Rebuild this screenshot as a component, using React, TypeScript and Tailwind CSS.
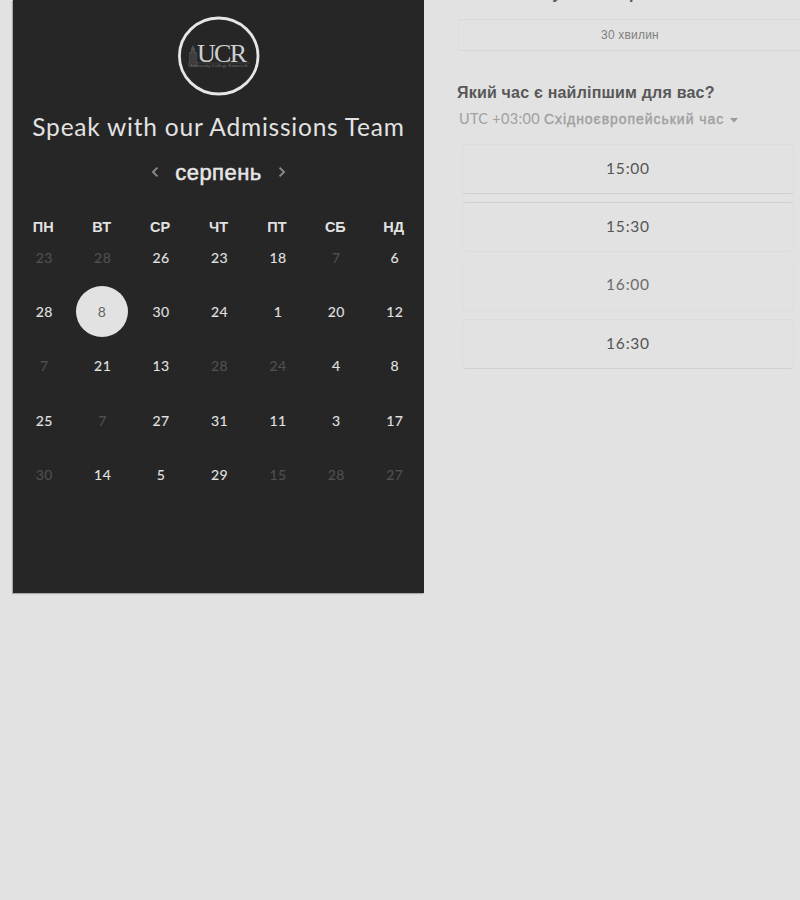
const weekdays = ['ПН', 'ВТ', 'СР', 'ЧТ', 'ПТ', 'СБ', 'НД'];

type Day = { n: number; off?: boolean; selected?: boolean };
const off = (n: number): Day => ({ n, off: true });
const on = (n: number): Day => ({ n });

const weeks: Day[][] = [
  [off(23), off(28), on(26), on(23), on(18), off(7), on(6)],
  [on(28), { n: 8, selected: true }, on(30), on(24), on(1), on(20), on(12)],
  [off(7), on(21), on(13), off(28), off(24), on(4), on(8)],
  [on(25), off(7), on(27), on(31), on(11), on(3), on(17)],
  [off(30), on(14), on(5), on(29), off(15), off(28), off(27)],
];

const slots = [
  { time: '15:00', border: 'border-t-[#dddddd] border-b-[#d0d0d0]', tone: 'text-[#555]' },
  { time: '15:30', border: 'border-t-[#d0d0d0] border-b-[#dcdcdc]', tone: 'text-[#555]' },
  { time: '16:00', border: 'border-t-[#dfdfdf] border-b-[#dedede]', tone: 'text-[#6c6c6c]' },
  { time: '16:30', border: 'border-t-[#dadada] border-b-[#d0d0d0]', tone: 'text-[#555]' },
];

function Logo() {
  return (
    <svg width="82" height="80" viewBox="0 0 82 80" className="block">
      <ellipse cx="40.7" cy="40" rx="39.3" ry="38" fill="none" stroke="#e6e6e6" strokeWidth="2.8" />
      <g fill="#505050">
        <path d="M15 29l2 4v4h-4v-4z" />
        <path d="M11 36h8v11h-8z" opacity=".75" />
        <path d="M10 46h10v5H10z" opacity=".5" />
      </g>
      <path d="M13 38v10M15 34v14M17 38v10" stroke="#303030" strokeWidth=".7" />
      <path d="M18 47h54" stroke="#4d4d4d" strokeWidth=".6" />
      <text x="19" y="45.8" fontFamily="Liberation Serif, serif" fontSize="26" fill="#cfcfcf" textLength="50" lengthAdjust="spacing">
        UCR
      </text>
      <text x="12.5" y="51.3" fontFamily="Liberation Serif, serif" fontSize="4.6" fill="#7a7a7a" textLength="57">
        University College Roosevelt
      </text>
    </svg>
  );
}

function Chevron({ right = false }: { right?: boolean }) {
  return (
    <svg width="8" height="12" viewBox="0 0 8 12" className={right ? 'rotate-180' : ''}>
      <path d="M6.4 1.6L2 6l4.4 4.4" fill="none" stroke="#888" strokeWidth="2" />
    </svg>
  );
}

function DayCell({ day }: { day: Day }) {
  if (day.selected) {
    return (
      <div className="flex items-center justify-center">
        <span className="-mt-px flex h-[51px] w-[52px] items-center justify-center rounded-[50%] bg-[#e2e2e2] pl-px text-[14px] text-[#666]">
          {day.n}
        </span>
      </div>
    );
  }
  return (
    <div
      className={`flex items-center justify-center pl-[2px] ${
        day.off
          ? 'text-[#505050] [-webkit-text-stroke:0.1px_#505050]'
          : 'text-[#e2e2e2] [-webkit-text-stroke:0.1px_#e2e2e2]'
      }`}
    >
      {day.n}
    </div>
  );
}

export default function App() {
  return (
    <div className="flex h-[900px] w-[800px] items-start overflow-hidden bg-[#e2e2e2] pl-[13px] font-['Lato','Liberation_Sans',sans-serif]">
      <section className="flex h-[593px] w-[411px] shrink-0 flex-col bg-[#262626] pt-4 shadow-[-1px_1px_1px_#aaa]">
        <div className="flex justify-center">
          <Logo />
        </div>
        <h1 className="mt-[13px] flex h-9 items-center justify-center whitespace-nowrap text-[24.5px] tracking-[0.78px] text-[#e2e2e2]">
          Speak with our Admissions Team
        </h1>
        <div className="mt-[9px] flex h-9 items-center justify-center gap-[16px]">
          <Chevron />
          <span className="font-['Liberation_Sans',sans-serif] text-[22px] tracking-[0.45px] text-[#e6e6e6] [-webkit-text-stroke:0.5px_#e6e6e6]">
            серпень
          </span>
          <Chevron right />
        </div>
        <div className="mt-[27px] grid h-5 grid-cols-7 px-[1px] font-['Liberation_Sans',sans-serif] text-[14.5px] font-bold leading-5 text-[#e2e2e2]">
          {weekdays.map((d) => (
            <div key={d} className="text-center">{d}</div>
          ))}
        </div>
        <div className="-mt-[7px] grid auto-rows-[54.4px] grid-cols-7 px-[1px] text-[14px] tracking-[0.4px]">
          {weeks.flat().map((day, i) => (
            <DayCell key={i} day={day} />
          ))}
        </div>
      </section>

      <section className="ml-[33px] w-[343px] shrink-0 font-['Liberation_Sans',sans-serif]">
        <h2 className="-mt-[16px] h-5 whitespace-nowrap text-base font-bold leading-5 tracking-[0.18px] text-[#585858]">
          Скільки часу вам потрібно?
        </h2>
        <div className="ml-[1px] mt-[15px] flex h-8 w-[346px] items-center justify-center rounded-[3px] border border-[#d8d8d8] border-l-[#dedede] pr-[2px] text-xs tracking-[0.2px] text-[#808080]">
          30 хвилин
        </div>
        <h2 className="mt-8 h-5 whitespace-nowrap text-base font-bold leading-5 tracking-[0.2px] text-[#585858]">
          Який час є найліпшим для вас?
        </h2>
        <div className="mt-[6px] flex h-5 items-center whitespace-nowrap pl-[2px] text-[#a0a0a0]">
          <span className="w-[85px] font-['Lato',sans-serif] text-[14.5px] tracking-[0.3px]">UTC +03:00</span>
          <span className="text-sm tracking-[0.95px] [-webkit-text-stroke:0.4px_#a0a0a0]">Східноєвропейський час</span>
          <svg width="8" height="5" viewBox="0 0 8 5" className="ml-[6px] mt-[2px]">
            <path d="M0 0h8L4 4.5z" fill="#999" />
          </svg>
        </div>
        <div className="ml-[5px] mt-[15px] flex w-[332px] flex-col gap-[8.3px]">
          {slots.map((s) => (
            <div
              key={s.time}
              className={`flex h-[50px] items-center justify-center rounded-[3px] border border-x-[#dddddd] pb-px font-['Lato',sans-serif] text-[15.5px] tracking-[0.8px] ${s.border} ${s.tone}`}
            >
              {s.time}
            </div>
          ))}
        </div>
      </section>
    </div>
  );
}
